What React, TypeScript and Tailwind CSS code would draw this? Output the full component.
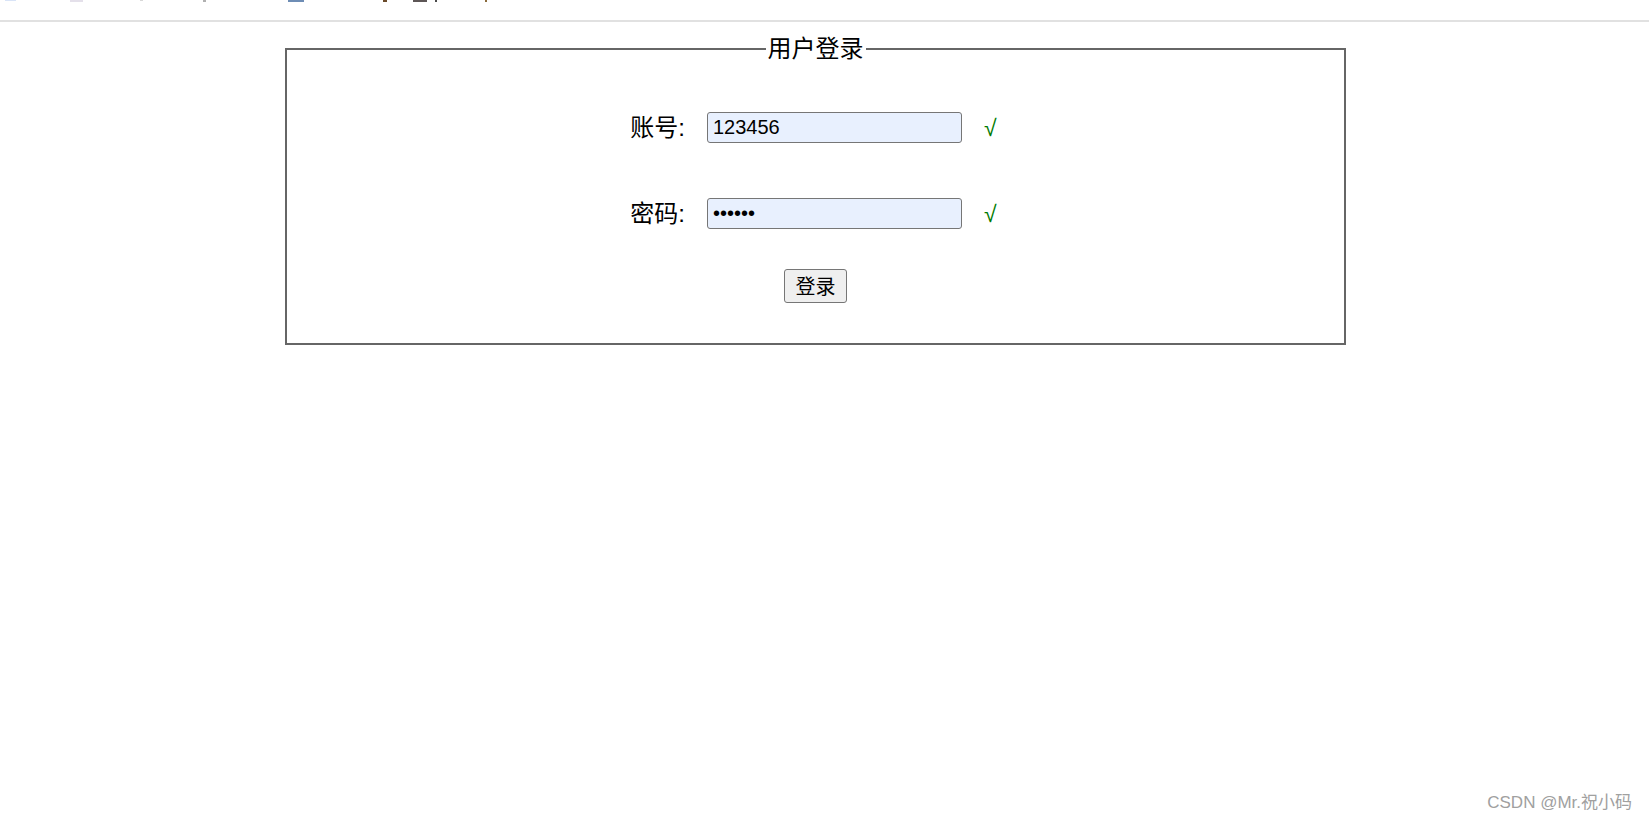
import React from "react";

const cjk = "font-['Liberation_Sans','Noto_Sans_CJK_SC',sans-serif]";

function Field({ label, type, value }: { label: string; type: string; value: string }) {
  return (
    <div className="flex items-center justify-center h-[31px]">
      <div className="w-[100px] text-right text-[24px] leading-[30px] text-black">
        {label}:
      </div>
      <input
        type={type}
        defaultValue={value}
        readOnly
        className="ml-[22px] w-[255px] h-[31px] px-[5px] text-[20px] leading-[24px] text-black bg-[#e8f0fe] border border-[#767676] rounded-[3px] outline-none font-['Liberation_Sans',sans-serif]"
      />
      <div className="w-[84px] pl-[22px] text-[23px] leading-[26px] text-[#007a00]">√</div>
    </div>
  );
}

export default function App() {
  return (
    <div className={`min-h-[821px] bg-white relative ${cjk}`}>
      {/* cut-off toolbar strip */}
      <div className="h-[22px] border-b-2 border-[#e1e1e1]">
        <div className="flex items-start h-[2px]">
          <span className="ml-[5px] w-[11px] h-[1px] bg-[#d9e4f7]" />
          <span className="ml-[54px] w-[13px] h-[2px] bg-[#e4e0ea]" />
          <span className="ml-[57px] w-[3px] h-[1px] bg-[#d8d8d8]" />
          <span className="ml-[60px] w-[3px] h-[2px] bg-[#b0b0b0]" />
          <span className="ml-[82px] w-[16px] h-[2px] bg-[#6e8db5]" />
          <span className="ml-[79px] w-[4px] h-[2px] bg-[#6a4a2a]" />
          <span className="ml-[26px] w-[14px] h-[2px] bg-[#5d5656]" />
          <span className="ml-[8px] w-[2px] h-[2px] bg-[#4a4a4a]" />
          <span className="ml-[48px] w-[2px] h-[2px] bg-[#8a6a3a]" />
        </div>
      </div>

      <fieldset className="ml-[285px] mt-[12px] w-[1061px] border-2 border-[#666666] pt-[48px] pb-[40px]">
        <legend className="mx-auto px-[2px] text-[24px] leading-[30px] text-black">用户登录</legend>

        <Field label="账号" type="text" value="123456" />
        <div className="mt-[55px]">
          <Field label="密码" type="password" value="123456" />
        </div>

        <div className="mt-[40px] flex justify-center">
          <button className="w-[63px] h-[34px] pt-[2px] text-[20px] leading-[26px] text-black bg-[#efefef] border border-[#767676] rounded-[3px]">
            登录
          </button>
        </div>
      </fieldset>

      <div className="absolute right-[17px] bottom-[8px] text-[17px] leading-[20px] text-[#a0a0a0]">
        CSDN @Mr.祝小码
      </div>
    </div>
  );
}
